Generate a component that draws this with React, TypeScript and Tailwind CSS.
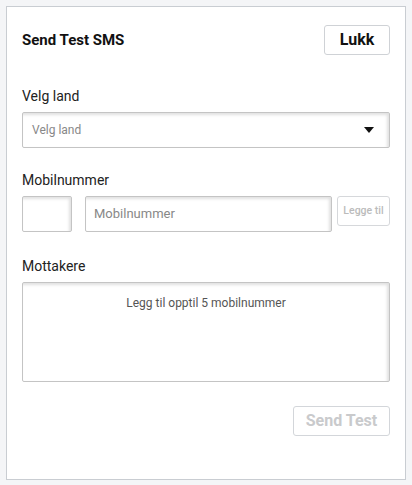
export default function App() {
  const inputShadow = 'shadow-[inset_-2px_2px_3px_rgba(0,0,0,0.12)]'
  return (
    <div className="min-h-[485px] bg-[#f4f5f7] p-[6px] font-['Roboto',sans-serif] text-[#222]">
      <div className="border border-[#c9cdd2] bg-white px-[15px] pt-[18px] pb-[43px]">
        {/* Header */}
        <div className="flex items-center justify-between">
          <h2 className="text-[15px] font-bold text-[#111]">Send Test SMS</h2>
          <button className="h-[30px] w-[66px] rounded-[3px] border border-[#cfd2d6] bg-white text-[16px] font-bold text-[#111]">
            Lukk
          </button>
        </div>

        {/* Country */}
        <label className="mt-[31px] block text-[14px] leading-[20px]">Velg land</label>
        <div className={`mt-[6px] flex h-[36px] items-center justify-between rounded-[2px] border border-[#c4c4c4] pl-[9px] pr-[15px] ${inputShadow}`}>
          <span className="text-[12px] text-[#888]">Velg land</span>
          <svg width="10" height="6" viewBox="0 0 10 6">
            <path d="M0 0h10L5 6z" fill="#111" />
          </svg>
        </div>

        {/* Phone */}
        <label className="mt-[22px] block text-[14px] leading-[20px]">Mobilnummer</label>
        <div className="mt-[6px] flex items-start">
          <div className={`h-[36px] w-[50px] rounded-[2px] border border-[#c4c4c4] ${inputShadow}`} />
          <div className={`ml-[13px] flex h-[36px] w-[247px] items-center rounded-[2px] border border-[#c4c4c4] pl-[8px] ${inputShadow}`}>
            <span className="text-[13px] text-[#888]">Mobilnummer</span>
          </div>
          <button className="ml-[5px] h-[30px] flex-1 rounded-[3px] border border-[#d6d8db] bg-white text-[10.5px] font-medium text-[#bbb]">
            Legge til
          </button>
        </div>

        {/* Recipients */}
        <label className="mt-[24px] block text-[14px] leading-[20px]">Mottakere</label>
        <div className={`mt-[6px] h-[100px] rounded-[2px] border border-[#c4c4c4] pt-[7px] text-center ${inputShadow}`}>
          <span className="text-[12px] text-[#555]">Legg til opptil 5 mobilnummer</span>
        </div>

        {/* Footer */}
        <div className="mt-[24px] flex justify-end">
          <button className="h-[30px] w-[97px] rounded-[3px] border border-[#d3d6da] bg-white text-[16px] font-bold text-[#c9cacc]">
            Send Test
          </button>
        </div>
      </div>
    </div>
  )
}
